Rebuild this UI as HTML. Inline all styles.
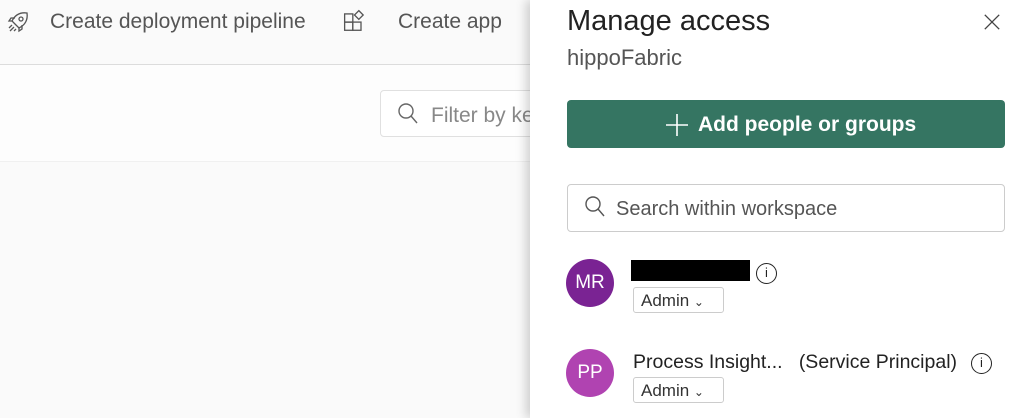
<!DOCTYPE html>
<html><head><style>
*{margin:0;padding:0;box-sizing:border-box}
body{width:1016px;height:418px;overflow:hidden;position:relative;background:#fafafa;font-family:"Liberation Sans",sans-serif;}
.a{position:absolute;white-space:nowrap}
</style></head><body>
<div class="a" style="left:0;top:0;width:540px;height:64px;background:#fafafa"></div>
<div class="a" style="left:0;top:64px;width:540px;height:1px;background:#dcdcdc"></div>
<div class="a" style="left:0;top:65px;width:540px;height:96px;background:#fdfdfd"></div>
<div class="a" style="left:0;top:161px;width:540px;height:1px;background:#f0f0f0"></div>
<svg class="a" style="left:6px;top:10px" width="24" height="24" viewBox="0 0 24 24" fill="none" stroke="#555" stroke-width="1.3"><path d="M9 14 L6 11 C9 5 14 2 21 3 C22 10 19 15 13 18 L10 15 Z"/><circle cx="15" cy="9" r="2"/><path d="M6 11 L3 11 L5 8 L9 8 M13 18 L13 21 L16 19 L16 15"/><path d="M6 15 L3 18 M8 17 L4 21 M10 19 L8 21"/></svg>
<div class="a" style="left:50px;top:10px;font-size:21px;color:#555">Create deployment pipeline</div>
<svg class="a" style="left:343px;top:9px" width="24" height="24" viewBox="0 0 22 22" fill="none" stroke="#555" stroke-width="1.2"><rect x="1.5" y="4.5" width="7.5" height="7.5"/><rect x="1.5" y="12" width="7.5" height="7.5"/><rect x="9" y="12" width="7.5" height="7.5"/><path d="M14.5 1.5 L18.5 5.5 L14.5 9.5 L10.5 5.5 Z"/></svg>
<div class="a" style="left:398px;top:10px;font-size:21px;color:#555">Create app</div>
<div class="a" style="left:380px;top:90px;width:170px;height:47px;border:1px solid #e0e0e0;border-radius:4px;background:#fff"></div>
<svg class="a" style="left:396px;top:102px" width="24" height="24" viewBox="0 0 24 24" fill="none" stroke="#666" stroke-width="1.4"><circle cx="10" cy="9" r="7"/><path d="M15 14 L21 21"/></svg>
<div class="a" style="left:431px;top:104px;font-size:21px;color:#888">Filter by ke</div>

<div class="a" style="left:530px;top:0;width:486px;height:418px;background:#fff;box-shadow:-4px 0 10px rgba(0,0,0,.18)"></div>
<div class="a" style="left:567px;top:5px;font-size:29px;color:#222">Manage access</div>
<div class="a" style="left:567px;top:45px;font-size:22px;color:#555">hippoFabric</div>
<svg class="a" style="left:983px;top:13px" width="18" height="18" viewBox="0 0 20 20" stroke="#444" stroke-width="1.5"><path d="M2 2 L18 18 M18 2 L2 18"/></svg>
<div class="a" style="left:567px;top:100px;width:438px;height:48px;background:#357562;border-radius:4px"></div>
<svg class="a" style="left:665px;top:113px" width="24" height="24" viewBox="0 0 24 24" stroke="#fff" stroke-width="1.6"><path d="M12 1 V23 M1 12 H23"/></svg>
<div class="a" style="left:698px;top:113px;font-size:21px;color:#fff;font-weight:bold">Add people or groups</div>
<div class="a" style="left:567px;top:184px;width:438px;height:48px;border:1px solid #ccc;border-radius:4px"></div>
<svg class="a" style="left:583px;top:195px" width="24" height="24" viewBox="0 0 24 24" fill="none" stroke="#555" stroke-width="1.4"><circle cx="10" cy="9" r="7"/><path d="M15 14 L21 21"/></svg>
<div class="a" style="left:616px;top:198px;font-size:20px;color:#555">Search within workspace</div>

<div class="a" style="left:566px;top:259px;width:48px;height:48px;border-radius:50%;background:#7a2393;color:#fff;font-size:19px;line-height:48px;text-align:center">MR</div>
<div class="a" style="left:631px;top:260px;width:119px;height:21px;background:#000"></div>
<div class="a" style="left:756px;top:263px;width:21px;height:21px;border:1.5px solid #222;border-radius:50%;font-size:13px;line-height:18px;text-align:center;color:#222">i</div>
<div class="a" style="left:633px;top:287px;width:91px;height:26px;border:1px solid #ccc;border-radius:3px;font-size:17px;color:#333;padding:3px 0 0 7px">Admin <span style="font-size:12px">&#8964;</span></div>
<div class="a" style="left:566px;top:349px;width:48px;height:48px;border-radius:50%;background:#b043b1;color:#fff;font-size:19px;line-height:48px;text-align:center">PP</div>
<div class="a" style="left:633px;top:351px;font-size:19.5px;color:#222">Process Insight...&nbsp;&nbsp; (Service Principal)</div>
<div class="a" style="left:971px;top:353px;width:21px;height:21px;border:1.5px solid #222;border-radius:50%;font-size:13px;line-height:18px;text-align:center;color:#222">i</div>
<div class="a" style="left:633px;top:377px;width:91px;height:26px;border:1px solid #ccc;border-radius:3px;font-size:17px;color:#333;padding:3px 0 0 7px">Admin <span style="font-size:12px">&#8964;</span></div>
</body></html>
